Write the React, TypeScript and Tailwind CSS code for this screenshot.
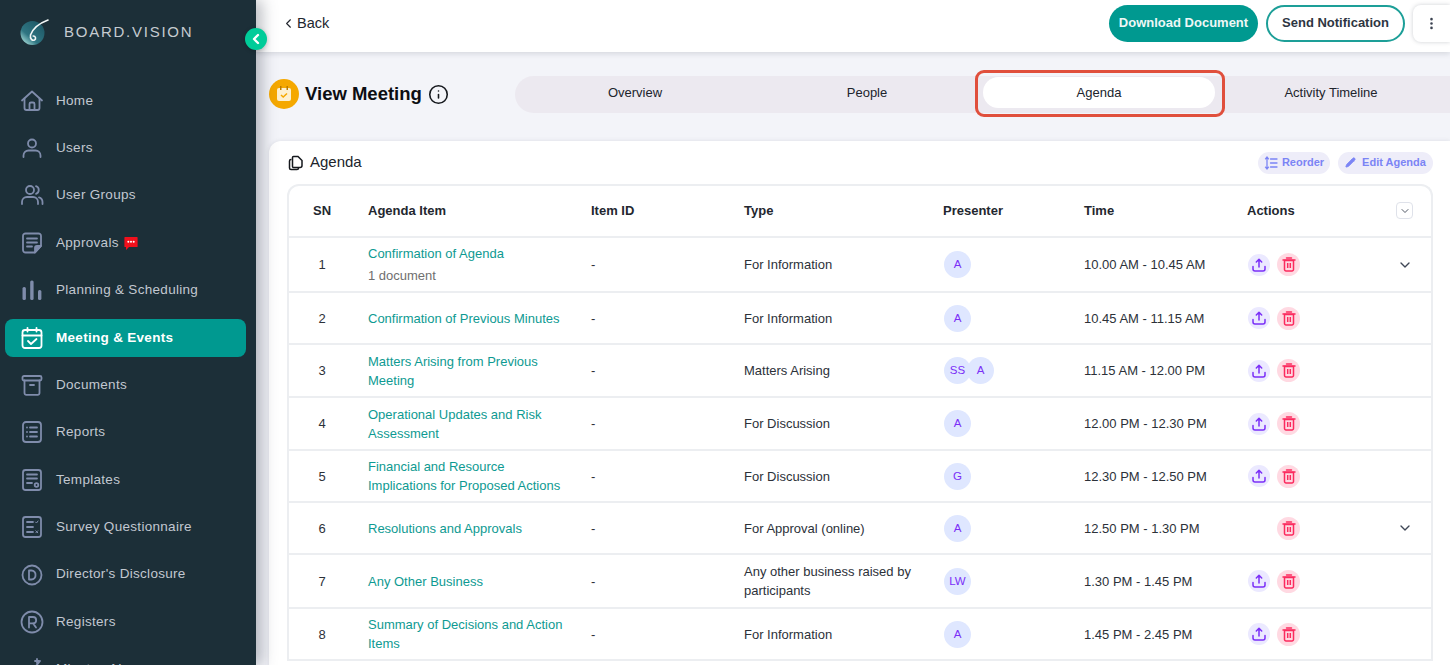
import type { ReactNode } from 'react';
import { ChevronDown, ChevronLeft, EllipsisVertical, Info, Pencil } from 'lucide-react';

const stroke = { fill: 'none', stroke: 'currentColor', strokeWidth: 1.8, strokeLinecap: 'round', strokeLinejoin: 'round' } as const;

function Ico({ children }: { children: ReactNode }) {
  return (
    <svg width="24" height="24" viewBox="0 0 24 24" {...stroke}>
      {children}
    </svg>
  );
}

const MENU: { label: string; icon: ReactNode; badge?: boolean; active?: boolean }[] = [
  { label: 'Home', icon: <Ico><path d="M2 11.5 12 2.5l10 9" /><path d="M4.5 9.5V19a2 2 0 0 0 2 2h11a2 2 0 0 0 2-2V9.5" /><path d="M9.5 21v-6a1.5 1.5 0 0 1 1.5-1.5h2a1.5 1.5 0 0 1 1.5 1.5v6" /></Ico> },
  { label: 'Users', icon: <Ico><circle cx="12" cy="7.5" r="4" /><path d="M3.5 21v-1.5a5 5 0 0 1 5-5h7a5 5 0 0 1 5 5V21" /></Ico> },
  { label: 'User Groups', icon: <Ico><circle cx="10" cy="7" r="4" /><path d="M2 21v-2a5 5 0 0 1 5-5h6a5 5 0 0 1 5 5v2" /><path d="M16 3.2a4 4 0 0 1 0 7.6" /><path d="M19 14.3a5 5 0 0 1 3.5 4.7v2" /></Ico> },
  { label: 'Approvals', badge: true, icon: <Ico><path d="M21 15V5a2.5 2.5 0 0 0-2.5-2.5h-13A2.5 2.5 0 0 0 3 5v14a2.5 2.5 0 0 0 2.5 2.5H15z" /><path d="M7 7.5h10M7 11.5h10M7 15.5h5" /><path d="M21 15h-4a2 2 0 0 0-2 2v4.500z" fill="currentColor" /></Ico> },
  { label: 'Planning & Scheduling', icon: <svg width="24" height="24" viewBox="0 0 24 24" fill="currentColor"><rect x="2.5" y="9" width="3.4" height="13" rx="1.5" /><rect x="10.2" y="2.5" width="3.4" height="19.5" rx="1.5" /><rect x="18" y="12" width="3.4" height="10" rx="1.5" /></svg> },
  { label: 'Meeting & Events', active: true, icon: <Ico><rect x="2.5" y="4" width="19" height="18" rx="2.5" /><path d="M2.5 9.5h19M7.5 1.8V5.5M16.5 1.8V5.5" /><path d="m8 15 3 3 5.5-5" /></Ico> },
  { label: 'Documents', icon: <Ico><rect x="2.5" y="3" width="19" height="4.5" rx="1.5" /><path d="M4.5 7.5V20a1.8 1.8 0 0 0 1.8 1.8h11.4a1.8 1.8 0 0 0 1.8-1.8V7.5" /><path d="M10 12h4" /></Ico> },
  { label: 'Reports', icon: <Ico><rect x="3" y="2" width="18" height="20" rx="3" /><path d="M10 7.5h7M10 12h7M10 16.5h7M7 7.5h.01M7 12h.01M7 16.5h.01" /></Ico> },
  { label: 'Templates', icon: <Ico><rect x="3" y="2" width="18" height="20" rx="2.5" /><path d="M7 6.5h10M7 10.5h10M7 15h5" /><circle cx="16.5" cy="17" r="1.8" /></Ico> },
  { label: 'Survey Questionnaire', icon: <Ico><rect x="3" y="2" width="18" height="20" rx="2.5" /><path d="M7 7h6M7 12h6M7 17h6" /><path d="m15.5 7 1 1 1.5-2" strokeWidth="1" /><path d="m15.8 15.8 2 2M17.8 15.8l-2 2" strokeWidth="1" /></Ico> },
  { label: "Director's Disclosure", icon: <Ico><circle cx="12" cy="12" r="9.5" /><path d="M9 7.5v9h2.5a4 4 0 0 0 4-4.500a4 4 0 0 0-4-4.500z" /></Ico> },
  { label: 'Registers', icon: <Ico><circle cx="12" cy="12" r="10.500" /><path d="M9 17.500V7h4a3 3 0 0 1 0 6.300H9M13 13.300l3 4.200" /></Ico> },
  { label: 'Minutes AI', icon: <Ico><path d="M2 21V9h14M16 9l4-5M17 2v4M15 4h4" /></Ico> },
];

type Row = { sn: number; item: string[]; doc?: boolean; type: string[]; who: string[]; time: string; h: string; upload?: boolean; open?: boolean };

const ROWS: Row[] = [
  { sn: 1, item: ['Confirmation of Agenda'], doc: true, type: ['For Information'], who: ['A'], time: '10.00 AM - 10.45 AM', h: 'h-[55px]', upload: true, open: true },
  { sn: 2, item: ['Confirmation of Previous Minutes'], type: ['For Information'], who: ['A'], time: '10.45 AM - 11.15 AM', h: 'h-[52px]', upload: true },
  { sn: 3, item: ['Matters Arising from Previous', 'Meeting'], type: ['Matters Arising'], who: ['SS', 'A'], time: '11.15 AM - 12.00 PM', h: 'h-[53px]', upload: true },
  { sn: 4, item: ['Operational Updates and Risk', 'Assessment'], type: ['For Discussion'], who: ['A'], time: '12.00 PM - 12.30 PM', h: 'h-[53px]', upload: true },
  { sn: 5, item: ['Financial and Resource', 'Implications for Proposed Actions'], type: ['For Discussion'], who: ['G'], time: '12.30 PM - 12.50 PM', h: 'h-[52px]', upload: true },
  { sn: 6, item: ['Resolutions and Approvals'], type: ['For Approval (online)'], who: ['A'], time: '12.50 PM - 1.30 PM', h: 'h-[52px]', open: true },
  { sn: 7, item: ['Any Other Business'], type: ['Any other business raised by', 'participants'], who: ['LW'], time: '1.30 PM - 1.45 PM', h: 'h-[54px]', upload: true },
  { sn: 8, item: ['Summary of Decisions and Action', 'Items'], type: ['For Information'], who: ['A'], time: '1.45 PM - 2.45 PM', h: 'h-[52px]', upload: true },
];

const GRID = 'grid grid-cols-[70px_223px_153px_199px_141px_163px_1fr] items-center pl-[9px]';

function Sidebar() {
  return (
    <aside className="relative z-20 w-[256px] shrink-0 bg-[#1c2f38] shadow-[6px_0_14px_rgba(60,65,80,0.35)]">
      <div className="flex h-[64px] items-center pl-[19px]">
        <svg width="32" height="30" viewBox="0 0 32 30">
          <defs>
            <linearGradient id="logo" x1="0.8" y1="0.1" x2="0.1" y2="0.9">
              <stop offset="0" stopColor="#1f5a68" />
              <stop offset="0.65" stopColor="#2f7582" />
              <stop offset="1" stopColor="#a5dcd8" />
            </linearGradient>
          </defs>
          <circle cx="13.500" cy="16" r="12" fill="url(#logo)" />
          <path d="M29 3C21 6 14 11 11.500 18c-.8 4 2 6 4 5 1.800-1 1.300-4-1.300-4" fill="none" stroke="#f2f7f7" strokeWidth="1.600" strokeLinecap="round" />
        </svg>
        <span className="ml-[13px] text-[15px] tracking-[1.75px] text-[#c5cbd0]">BOARD.VISION</span>
      </div>
      <button className="absolute left-[245px] top-[28px] flex h-[22px] w-[22px] items-center justify-center rounded-full bg-[#00cc99] text-white shadow-[0_1px_4px_rgba(0,0,0,0.2)]">
        <ChevronLeft size={16} strokeWidth={3.500} />
      </button>
      <nav className="flex flex-col pt-[13px]">
        {MENU.map((m) => (
          <div
            key={m.label}
            className={
              m.active
                ? 'my-[4.700px] ml-[5px] mr-[10px] flex h-[38px] items-center rounded-lg bg-[#009990] pl-[15px] font-bold text-white'
                : 'ml-[5px] mr-[10px] flex h-[47.400px] items-center pl-[15px] text-[#c2c8d1]'
            }
          >
            <span className={m.active ? 'text-white' : 'text-[#7f8cab]'}>{m.icon}</span>
            <span className="ml-[12px] text-[13.500px] tracking-[0.3px]">{m.label}</span>
            {m.badge && (
              <svg className="ml-[5px]" width="14" height="14" viewBox="0 0 14 14">
                <path d="M1 1h12a.6.6 0 0 1 .6.6v8.800a.6.6 0 0 1-.6.6H5l-3 3v-3H1a.6.6 0 0 1-.6-.6V1.600A.6.6 0 0 1 1 1z" fill="#f0101c" />
                <circle cx="4.300" cy="5.700" r="1" fill="#fff" />
                <circle cx="7" cy="5.700" r="1" fill="#fff" />
                <circle cx="9.700" cy="5.700" r="1" fill="#fff" />
              </svg>
            )}
          </div>
        ))}
      </nav>
    </aside>
  );
}

function TopBar() {
  return (
    <header className="relative z-10 flex h-[52px] items-center justify-between bg-white pl-[25px] shadow-[0_2px_5px_rgba(90,95,110,0.18)]">
      <button className="flex items-center gap-[1px] pb-[5px] text-[14.500px] text-[#23272f]">
        <ChevronLeft size={15} strokeWidth={1.800} />
        Back
      </button>
      <div className="flex items-center gap-2 self-start pt-[5px]">
        <button className="flex h-[37px] w-[149px] items-center justify-center rounded-full bg-[#009990] pb-[2px] text-[13px] font-bold text-[#eef7f6]">Download Document</button>
        <button className="flex h-[37px] w-[139px] items-center justify-center rounded-full border-2 border-[#1d9f98] bg-white pb-[2px] text-[13px] font-bold text-[#2e3642]">Send Notification</button>
        <button className="flex h-[37px] w-[37px] items-center justify-center rounded-l-lg bg-white text-[#3a4150] shadow-[0_0_4px_rgba(90,95,110,0.3)]">
          <EllipsisVertical size={15} strokeWidth={2.200} />
        </button>
      </div>
    </header>
  );
}

function Tabs() {
  const tabs = ['Overview', 'People', 'Agenda', 'Activity Timeline'];
  return (
    <div className="relative flex h-[37px] flex-1 items-center rounded-l-full bg-[#ece9f0] pl-[4px]">
      {tabs.map((t) => (
        <div
          key={t}
          className={
            t === 'Agenda'
              ? 'relative mb-[3px] flex h-[31px] w-[232px] items-center justify-center rounded-full bg-white text-[13px] text-[#20242c]'
              : 'mb-[3px] flex h-[31px] w-[232px] items-center justify-center text-[13px] text-[#20242c]'
          }
        >
          {t}
          {t === 'Agenda' && <div className="pointer-events-none absolute -top-[7px] -bottom-[9px] -left-[8px] -right-[10px] rounded-[9px] border-[3.500px] border-[#e04f3c]" />}
        </div>
      ))}
    </div>
  );
}

function Avatar({ text, overlap }: { text: string; overlap?: boolean }) {
  return (
    <div className={overlap ? '-ml-[4px] flex h-[27px] w-[27px] items-center justify-center rounded-full bg-[#dfe7ff] text-[11.500px] text-[#7b2ff7]' : 'flex h-[27px] w-[27px] items-center justify-center rounded-full bg-[#dfe7ff] text-[11.500px] text-[#7b2ff7]'}>
      {text}
    </div>
  );
}

function UploadIcon() {
  return (
    <svg width="14" height="14" viewBox="0 0 14 14" fill="none" stroke="currentColor" strokeWidth="1.500" strokeLinecap="round" strokeLinejoin="round">
      <path d="M7 9V1.500M4.300 4 7 1.300 9.700 4" />
      <path d="M1 8.500v2.500a2 2 0 0 0 2 2h8a2 2 0 0 0 2-2V8.500" />
    </svg>
  );
}

function TrashIcon() {
  return (
    <svg width="14" height="15" viewBox="0 0 14 15" fill="none" stroke="currentColor" strokeWidth="1.500">
      <path d="M4.500 1h5M1 3h12" strokeLinecap="round" />
      <path d="M2.500 3.500h9V12.500a1.500 1.500 0 0 1-1.500 1.500H4a1.500 1.500 0 0 1-1.500-1.500z" />
      <path d="M5.700 6v5M8.300 6v5" />
    </svg>
  );
}

function AgendaRow({ row }: { row: Row }) {
  return (
    <div className={`${GRID} ${row.h} border-b-2 border-[#eceef1] text-[13px] leading-[19px] text-[#2c3139]`}>
      <div className="pr-[22px] text-center">{row.sn}</div>
      <div className="text-[#0e9a92]">
        {row.item.map((l) => <div key={l}>{l}</div>)}
        {row.doc && <div className="mt-[3px] text-[#6f6f6f]">1 document</div>}
      </div>
      <div>-</div>
      <div>{row.type.map((l) => <div key={l}>{l}</div>)}</div>
      <div className="flex pl-[1px]">
        {row.who.map((w, i) => <Avatar key={w} text={w} overlap={i > 0} />)}
      </div>
      <div>{row.time}</div>
      <div className="flex items-center justify-between pl-[1px] pr-[18px]">
        <div className="flex items-center gap-[7px]">
          {row.upload ? (
            <div className="flex h-[22px] w-[22px] items-center justify-center rounded-full bg-[#ebe9ff] text-[#7b2ff7]">
              <UploadIcon />
            </div>
          ) : (
            <div className="h-[22px] w-[22px]" />
          )}
          <div className="flex h-[23px] w-[23px] items-center justify-center rounded-full bg-[#ffd9e2] text-[#fb2a5e]">
            <TrashIcon />
          </div>
        </div>
        {row.open && <ChevronDown size={16} strokeWidth={2} className="text-[#3f4756]" />}
      </div>
    </div>
  );
}

export default function App() {
  return (
    <div className="flex h-[665px] w-[1450px] overflow-hidden bg-[#f3f4f9] font-['Liberation_Sans',sans-serif]">
      <Sidebar />
      <main className="min-w-0 flex-1">
        <TopBar />
        <div className="flex h-[89px] items-center pb-[5px] pl-[13px]">
          <div className="flex w-[246px] items-center">
            <div className="flex h-[30px] w-[30px] items-center justify-center rounded-full bg-[#f5a800]">
              <svg width="18" height="18" viewBox="0 0 18 18">
                <rect x="2" y="3" width="14" height="13" rx="2" fill="#fdf0d0" />
                <rect x="5" y="1" width="1.500" height="4" fill="#b87a00" />
                <rect x="11.500" y="1" width="1.500" height="4" fill="#b87a00" />
                <path d="m6 10 2.200 2 3.800-3.500" fill="none" stroke="#f5a800" strokeWidth="1.500" />
              </svg>
            </div>
            <h1 className="ml-[6px] text-[18.500px] font-bold text-[#0c0e12]">View Meeting</h1>
            <Info size={21} strokeWidth={1.800} className="ml-[6px] text-[#15181d]" />
          </div>
          <Tabs />
        </div>
        <section className="ml-[13px] h-[600px] rounded-tl-xl bg-white pl-[18px] pr-[17px] shadow-[0_0_4px_rgba(90,95,110,0.15)]">
          <div className="flex h-[43px] items-center justify-between">
            <div className="flex items-center gap-[6px] pl-[1px] text-[15px] text-[#20242c]">
              <svg width="16" height="16" viewBox="0 0 16 16" fill="none" stroke="#15181d" strokeWidth="1.500">
                <path d="M5.500 1.500h4.500l4 4v5a2 2 0 0 1-2 2h-6.500a1 1 0 0 1-1-1V2.500a1 1 0 0 1 1-1z" />
                <path d="M3.500 4.500h-.5a1.500 1.500 0 0 0-1.500 1.500v7a1.500 1.500 0 0 0 1.500 1.500h6a1.500 1.500 0 0 0 1.500-1.500" />
              </svg>
              Agenda
            </div>
            <div className="flex items-center gap-2">
              <button className="flex h-[22px] w-[72px] items-center justify-center gap-[4px] rounded-full bg-[#eeedf9] text-[11px] font-bold text-[#7b84f5]">
                <svg width="14" height="14" viewBox="0 0 14 14" fill="none" stroke="currentColor" strokeWidth="1.300" strokeLinecap="round">
                  <path d="M3 1v12M1.500 2.800 3 1l1.500 1.800M1.500 11.200 3 13l1.500-1.800M6.500 3H13M6.500 7H13M6.500 11H13" />
                </svg>
                Reorder
              </button>
              <button className="flex h-[22px] w-[95px] items-center justify-center gap-[6px] rounded-full bg-[#eeedf9] text-[11px] font-bold text-[#7b84f5]">
                <Pencil size={11} fill="currentColor" />
                Edit Agenda
              </button>
            </div>
          </div>
          <div className="rounded-t-xl border-2 border-b-0 border-[#eceef1]">
            <div className={`${GRID} h-[52px] border-b-2 border-[#eceef1] pb-[1px] text-[13px] font-bold text-[#23272f]`}>
              <div className="pr-[22px] text-center">SN</div>
              <div>Agenda Item</div>
              <div>Item ID</div>
              <div>Type</div>
              <div>Presenter</div>
              <div>Time</div>
              <div className="flex items-center justify-between pr-[18px]">
                Actions
                <div className="flex h-[17px] w-[17px] items-center justify-center rounded border border-[#dfe2ea]">
                  <ChevronDown size={12} strokeWidth={1.800} className="text-[#3f4756]" />
                </div>
              </div>
            </div>
            {ROWS.map((r) => <AgendaRow key={r.sn} row={r} />)}
          </div>
        </section>
      </main>
    </div>
  );
}
